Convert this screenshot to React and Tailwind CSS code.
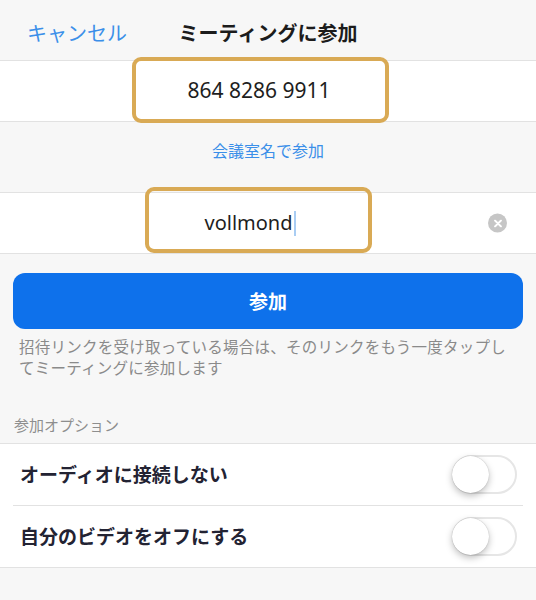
import React from 'react';

const jp = "font-['Noto_Sans_CJK_JP',sans-serif]";
const latin = "font-['Noto_Sans','Noto_Sans_CJK_JP',sans-serif]";

function Toggle() {
  return (
    <div className="relative h-[39px] w-[65px] rounded-full border-2 border-[#e6e6e6] bg-white">
      <div className="absolute left-[-2px] top-[-1px] h-[37px] w-[37px] rounded-full bg-white shadow-[0_3px_7px_rgba(0,0,0,0.25),0_0_1px_rgba(0,0,0,0.3)]" />
    </div>
  );
}

function OptionRow({ label }) {
  return (
    <div className="flex h-[61px] items-center justify-between pl-[20px] pr-[19px]">
      <span className="text-[19px] font-bold text-[#232333]">{label}</span>
      <Toggle />
    </div>
  );
}

export default function App() {
  return (
    <div className={`relative min-h-[600px] w-[536px] bg-[#f7f7f7] ${jp}`}>
      {/* header */}
      <div className="grid h-[61px] grid-cols-[1fr_auto_1fr] items-center border-b border-[#e2e2e2] pt-[5px]">
        <span className="pl-[27px] text-[20px] text-[#3b8fe9]">キャンセル</span>
        <span className="text-[20px] font-bold text-[#1c1c1c]">ミーティングに参加</span>
        <span />
      </div>

      {/* meeting id */}
      <div className="relative flex h-[61px] items-center justify-center border-b border-[#e2e2e2] bg-white pr-[18px]">
        <span className={`${latin} text-[21px] text-[#1e1e1e]`}>864 8286 9911</span>
      </div>

      <div className="flex h-[70px] justify-center pt-[17px]">
        <span className="text-[16px] leading-[22px] text-[#3b8fe9]">会議室名で参加</span>
      </div>

      {/* display name */}
      <div className="relative flex h-[62px] items-center justify-center border-y border-[#e2e2e2] bg-white pr-[36px]">
        <span className={`${latin} text-[20px] text-[#1e1e1e]`}>vollmond</span>
        <span className="ml-[1px] h-[25px] w-[2px] bg-[#a9cdf3]" />
        <button
          type="button"
          className="absolute right-[29px] top-1/2 flex h-[19px] w-[19px] -translate-y-1/2 items-center justify-center rounded-full bg-[#c6c6c6]"
        >
          <svg width="8" height="8" viewBox="0 0 8 8">
            <path d="M1 1L7 7M7 1L1 7" stroke="white" strokeWidth="1.8" strokeLinecap="round" />
          </svg>
        </button>
      </div>

      <div className="px-[13px] pt-[19px]">
        <button
          type="button"
          className="flex h-[56px] w-full items-center justify-center rounded-[12px] bg-[#0e71eb] text-[19px] font-bold text-white"
        >
          参加
        </button>
      </div>

      <p className="mt-[7px] w-[510px] pl-[19px] text-[15.5px] leading-[21px] tracking-[0.25px] text-[#8a8a8a]">
        招待リンクを受け取っている場合は、そのリンクをもう一度タップしてミーティングに参加します
      </p>

      <div className="mt-[37px] mb-[8px] pl-[14px] text-[15px] leading-[20px] text-[#8e8e8e]">参加オプション</div>

      <div className="border-y border-[#e2e2e2] bg-white">
        <OptionRow label="オーディオに接続しない" />
        <div className="mx-[13px] border-t border-[#e2e2e2]" />
        <OptionRow label="自分のビデオをオフにする" />
      </div>

      {/* highlight boxes */}
      <div className="absolute left-[132px] top-[57px] h-[66px] w-[257px] rounded-[9px] border-[4px] border-[#d9aa55]" />
      <div className="absolute left-[145px] top-[187px] h-[66px] w-[227px] rounded-[9px] border-[4px] border-[#d9aa55]" />
    </div>
  );
}
